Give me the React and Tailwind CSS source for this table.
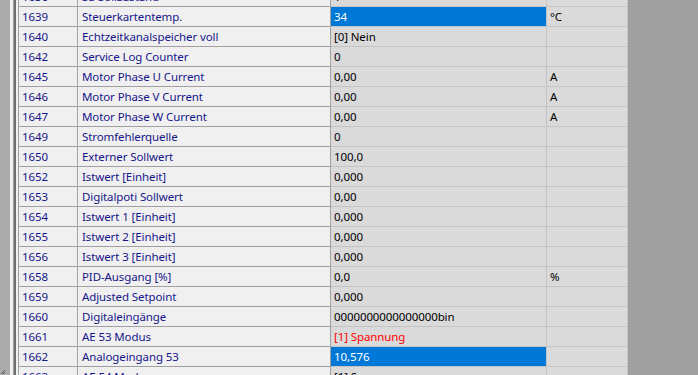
const ROWS = [
  { id: "1636", name: "SE-Sollzustand", value: "1" },
  { id: "1639", name: "Steuerkartentemp.", value: "34", unit: "°C", selected: true },
  { id: "1640", name: "Echtzeitkanalspeicher voll", value: "[0] Nein" },
  { id: "1642", name: "Service Log Counter", value: "0" },
  { id: "1645", name: "Motor Phase U Current", value: "0,00", unit: "A" },
  { id: "1646", name: "Motor Phase V Current", value: "0,00", unit: "A" },
  { id: "1647", name: "Motor Phase W Current", value: "0,00", unit: "A" },
  { id: "1649", name: "Stromfehlerquelle", value: "0" },
  { id: "1650", name: "Externer Sollwert", value: "100,0" },
  { id: "1652", name: "Istwert [Einheit]", value: "0,000" },
  { id: "1653", name: "Digitalpoti Sollwert", value: "0,00" },
  { id: "1654", name: "Istwert 1 [Einheit]", value: "0,000" },
  { id: "1655", name: "Istwert 2 [Einheit]", value: "0,000" },
  { id: "1656", name: "Istwert 3 [Einheit]", value: "0,000" },
  { id: "1658", name: "PID-Ausgang [%]", value: "0,0", unit: "%" },
  { id: "1659", name: "Adjusted Setpoint", value: "0,000" },
  { id: "1660", name: "Digitaleingänge", value: "0000000000000000bin" },
  { id: "1661", name: "AE 53 Modus", value: "[1] Spannung", red: true },
  { id: "1662", name: "Analogeingang 53", value: "10,576", selected: true },
  { id: "1663", name: "AE 54 Modus", value: "[1] Spannung" },
];

const Row = ({ row }) => {
  const valueCls = row.selected
    ? "bg-[#0078d7] text-white"
    : row.red
    ? "bg-[#dadada] text-[#ff0000]"
    : "bg-[#dadada] text-black";
  return (
    <div className="grid grid-cols-[59px_253px_216px_81px] h-[20px]">
      <div className="bg-[#f0f0f0] text-[#16168a] border-r border-b border-[#a0a0a0] pl-[3px] leading-[19px] whitespace-nowrap overflow-hidden">
        {row.id}
      </div>
      <div className="bg-[#f0f0f0] text-[#16168a] border-r border-b border-[#a0a0a0] pl-[4px] leading-[19px] whitespace-nowrap overflow-hidden">
        {row.name}
      </div>
      <div className="border-r border-b border-[#c4c4c4] bg-[#dadada]">
        <div className={`h-full pl-[3px] leading-[19px] whitespace-nowrap overflow-hidden ${valueCls}`}>
          {row.value}
        </div>
      </div>
      <div className="bg-[#dadada] text-black border-r border-b border-[#c4c4c4] pl-[3px] leading-[19px] whitespace-nowrap overflow-hidden">
        {row.unit}
      </div>
    </div>
  );
};

export default function App() {
  return (
    <div
      className="relative flex w-[698px] h-[375px] overflow-hidden bg-[#a0a0a0] text-[11.5px] tracking-[-0.1px]"
      style={{ fontFamily: '"Noto Sans", "Open Sans", sans-serif' }}
    >
      {/* window frame on the left */}
      <div className="w-[10px] shrink-0 bg-[#ababab]" />
      <div className="w-[3px] shrink-0 bg-[#f0f0f0]" />
      <div className="w-px shrink-0 bg-[#a0a0a0]" />
      <div className="w-[2px] shrink-0 bg-[#6d6d6d]" />
      <div className="w-[2px] shrink-0 bg-[#f0f0f0]" />

      {/* parameter grid */}
      <div className="flex flex-col border-l border-[#a0a0a0] -mt-[13px]">
        {ROWS.map((row) => (
          <Row key={row.id} row={row} />
        ))}
      </div>

      <svg className="absolute left-0 bottom-0" width="6" height="6" viewBox="0 0 6 6">
        <path d="M1 5 L5 1" stroke="#5a5a5a" strokeWidth="1" />
        <path d="M3 5 L5 3" stroke="#5a5a5a" strokeWidth="1" />
      </svg>
    </div>
  );
}
